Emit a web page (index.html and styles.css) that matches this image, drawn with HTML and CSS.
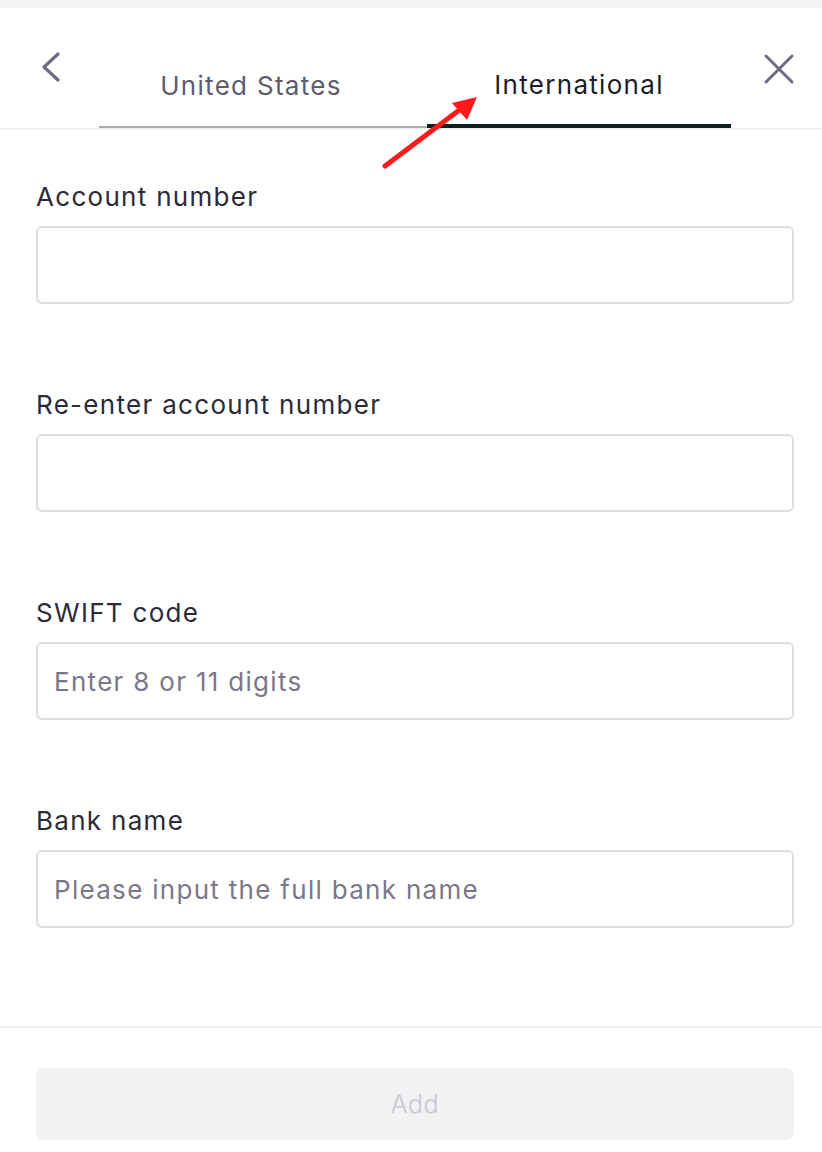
FILE: index.html
```html
<!DOCTYPE html>
<html lang="en">
<head>
<meta charset="utf-8">
<title>Add bank account</title>
<link rel="stylesheet" href="styles.css">
</head>
<body>
<div class="page">
  <div class="topbar"></div>
  <header class="header">
    <button class="icon-btn back" aria-label="Back">
      <svg width="28" height="34" viewBox="0 0 28 34"><polyline points="18,4 4,17 18,30" fill="none" stroke="#6e6b80" stroke-width="3.2" stroke-linecap="round" stroke-linejoin="round"/></svg>
    </button>
    <nav class="tabs">
      <div class="tab tab-us">United States</div>
      <div class="tab tab-intl active">International</div>
    </nav>
    <button class="icon-btn close" aria-label="Close">
      <svg width="32" height="32" viewBox="0 0 32 32"><path d="M3 3 L29 29 M29 3 L3 29" fill="none" stroke="#6e6b80" stroke-width="3" stroke-linecap="round"/></svg>
    </button>
  </header>
  <main class="form">
    <div class="field">
      <label class="label">Account number</label>
      <div class="input"></div>
    </div>
    <div class="field">
      <label class="label">Re-enter account number</label>
      <div class="input"></div>
    </div>
    <div class="field">
      <label class="label">SWIFT code</label>
      <div class="input"><span class="placeholder">Enter 8 or 11 digits</span></div>
    </div>
    <div class="field">
      <label class="label">Bank name</label>
      <div class="input"><span class="placeholder">Please input the full bank name</span></div>
    </div>
  </main>
  <footer class="footer">
    <button class="add-btn">Add</button>
  </footer>
  <svg class="annotation" width="822" height="200" viewBox="0 0 822 200">
    <line x1="385" y1="166" x2="462" y2="108" stroke="#ff1a1a" stroke-width="5" stroke-linecap="round"/>
    <polygon points="477,97 452,103 467,120" fill="#ff1a1a"/>
  </svg>
</div>
</body>
</html>
```
FILE: styles.css
```css
* { box-sizing: border-box; }
html, body { margin: 0; padding: 0; background: #fff; }
body { font-family: "Inter", "Noto Sans", sans-serif; color: #2c2a38; }
.page { position: relative; width: 822px; min-height: 1152px; }
.topbar { height: 8px; background: #f4f4f5; }
.header {
  height: 122px;
  display: flex;
  align-items: flex-start;
  border-bottom: 2px solid #f1f1f3;
}
.icon-btn { background: none; border: 0; padding: 0; cursor: pointer; display: flex; }
.back { margin: 42px 0 0 40px; }
.tabs {
  display: grid;
  grid-template-columns: 328px 304px;
  margin-left: 31px;
  height: 120px;
  border-bottom: 2px solid #aeadb6;
}
.tab {
  display: flex;
  align-items: center;
  justify-content: center;
  padding-top: 36px;
  font-size: 26px;
  letter-spacing: 1.3px;
  color: #5d5b6c;
}
.tab-us { padding-right: 24px; }
.tab.active { color: #1b1c26; border-bottom: 4px solid #0e1f20; margin-bottom: -2px; }
.close { margin: 45px 0 0 32px; }
.form { padding: 51px 28px 0 36px; height: 898px; border-bottom: 2px solid #f1f1f3; }
.field { margin-bottom: 85px; }
.label {
  display: block;
  font-size: 26px;
  letter-spacing: 1.3px;
  line-height: 32px;
  margin-bottom: 13px;
  color: #2c2a38;
}
.input {
  height: 78px;
  border: 2px solid #dedde2;
  border-radius: 6px;
  display: flex;
  align-items: center;
  padding: 0 16px;
}
.placeholder { font-size: 26px; letter-spacing: 1.3px; color: #7a7789; }
.footer { padding: 40px 28px 0 36px; }
.add-btn {
  width: 758px;
  height: 72px;
  border: 0;
  border-radius: 8px;
  background: #f2f2f4;
  color: #c8c7cd;
  font-family: "Inter", sans-serif;
  font-size: 25px;
  letter-spacing: 0.5px;
  font-weight: 300;
}
.annotation { position: absolute; left: 0; top: 0; pointer-events: none; }
```
